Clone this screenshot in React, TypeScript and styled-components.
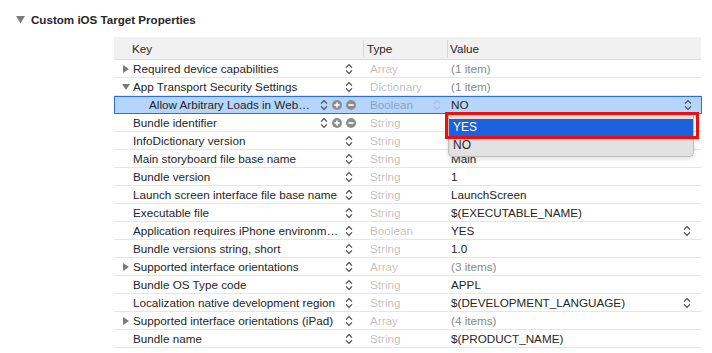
import React from "react";
import styled, { createGlobalStyle } from "styled-components";

const GlobalStyle = createGlobalStyle`
  html, body {
    margin: 0;
    padding: 0;
    background: #fff;
  }
  body {
    font-family: "Liberation Sans", Arial, sans-serif;
    font-size: 11.7px;
    color: #262626;
  }
`;

type Item = {
  key: string;
  type: string;
  value: string;
  disclosure?: "open" | "closed";
  indent?: boolean;
  editing?: boolean;
  selected?: boolean;
  muted?: boolean;
  popup?: boolean;
};

// values of the two rows under the open menu are covered by it
const items: Item[] = [
  { key: "Required device capabilities", type: "Array", value: "(1 item)", disclosure: "closed", muted: true },
  { key: "App Transport Security Settings", type: "Dictionary", value: "(1 item)", disclosure: "open", muted: true },
  { key: "Allow Arbitrary Loads in Web…", type: "Boolean", value: "NO", indent: true, editing: true, selected: true, popup: true },
  { key: "Bundle identifier", type: "String", value: "", editing: true },
  { key: "InfoDictionary version", type: "String", value: "" },
  { key: "Main storyboard file base name", type: "String", value: "Main" },
  { key: "Bundle version", type: "String", value: "1" },
  { key: "Launch screen interface file base name", type: "String", value: "LaunchScreen" },
  { key: "Executable file", type: "String", value: "$(EXECUTABLE_NAME)" },
  { key: "Application requires iPhone environm…", type: "Boolean", value: "YES", popup: true },
  { key: "Bundle versions string, short", type: "String", value: "1.0" },
  { key: "Supported interface orientations", type: "Array", value: "(3 items)", disclosure: "closed", muted: true },
  { key: "Bundle OS Type code", type: "String", value: "APPL" },
  { key: "Localization native development region", type: "String", value: "$(DEVELOPMENT_LANGUAGE)", popup: true },
  { key: "Supported interface orientations (iPad)", type: "Array", value: "(4 items)", disclosure: "closed", muted: true },
  { key: "Bundle name", type: "String", value: "$(PRODUCT_NAME)" },
];

function UpDown({ faded }: { faded?: boolean }) {
  return (
    <ChevronSvg width="8" height="12" viewBox="0 0 8 12" $faded={faded}>
      <path d="M1 4.6 L4 1.6 L7 4.6" />
      <path d="M1 7.4 L4 10.4 L7 7.4" />
    </ChevronSvg>
  );
}

function Triangle({ open }: { open?: boolean }) {
  return (
    <TriangleSvg width="8" height="8" viewBox="0 0 8 8">
      {open ? <path d="M0 1 H8 L4 7 Z" /> : <path d="M1 0 V8 L7 4 Z" />}
    </TriangleSvg>
  );
}

function RoundButton({ kind }: { kind: "add" | "remove" }) {
  return (
    <svg width="10" height="10" viewBox="0 0 10 10">
      <circle cx="5" cy="5" r="5" fill="#8e8e8e" />
      <path d="M2.4 5 H7.6" stroke="#fff" strokeWidth="1.6" />
      {kind === "add" && <path d="M5 2.4 V7.6" stroke="#fff" strokeWidth="1.6" />}
    </svg>
  );
}

export default function App() {
  return (
    <Page>
      <GlobalStyle />
      <SectionTitle>
        <SectionArrow viewBox="0 0 9 8" width="9" height="8">
          <path d="M0 0 H9 L4.5 7.5 Z" />
        </SectionArrow>
        Custom iOS Target Properties
      </SectionTitle>

      <Table>
        <HeaderRow>
          <HeaderCell $pad={18}>Key</HeaderCell>
          <HeaderCell $pad={3} $divider>Type</HeaderCell>
          <HeaderCell $pad={2} $divider>Value</HeaderCell>
        </HeaderRow>

        {items.map((item) => (
          <Row key={item.key} $selected={item.selected}>
            <KeyCell $indent={item.indent} $editing={item.editing}>
              <Disclosure>
                {item.disclosure && <Triangle open={item.disclosure === "open"} />}
              </Disclosure>
              <KeyText>{item.key}</KeyText>
              <Controls>
                <UpDown />
                {item.editing && <RoundButton kind="add" />}
                {item.editing && <RoundButton kind="remove" />}
              </Controls>
            </KeyCell>
            <TypeCell>
              <span>{item.type}</span>
              {item.selected && <UpDown faded />}
            </TypeCell>
            <ValueCell $muted={item.muted}>
              <span>{item.value}</span>
              {item.popup && <UpDown />}
              {item.selected && (
                <Menu>
                  <MenuOption $active>YES</MenuOption>
                  <MenuOption>NO</MenuOption>
                  <Highlight />
                </Menu>
              )}
            </ValueCell>
          </Row>
        ))}
      </Table>
    </Page>
  );
}

const Page = styled.div`
  width: 712px;
  height: 353px;
  overflow: hidden;
  padding: 12px 0 0 16px;
  box-sizing: border-box;
`;

const SectionTitle = styled.div`
  display: flex;
  align-items: center;
  gap: 6px;
  height: 14px;
  font-size: 11.6px;
  font-weight: bold;
  color: #262626;
`;

const SectionArrow = styled.svg`
  fill: #7d7d7d;
  margin-top: 1px;
`;

const Table = styled.div`
  margin: 11px 0 0 98px;
  width: 587px;
`;

const columns = "249px 84px 1fr";

const HeaderRow = styled.div`
  display: grid;
  grid-template-columns: ${columns};
  background: #f1f1f1;
  border-bottom: 1px solid #dcdcdc;
  padding: 3px 0 2px;
`;

const HeaderCell = styled.div<{ $pad: number; $divider?: boolean }>`
  height: 17px;
  line-height: 17px;
  padding-left: ${(p) => p.$pad}px;
  border-left: ${(p) => (p.$divider ? "1px solid #d6d6d6" : "none")};
  color: #262626;
`;

const Row = styled.div<{ $selected?: boolean }>`
  display: grid;
  grid-template-columns: ${columns};
  height: 18px;
  box-sizing: border-box;
  border-bottom: 1px solid ${(p) => (p.$selected ? "#2a6ee6" : "#e6e6e6")};
  background: ${(p) => (p.$selected ? "#b5d5fa" : "transparent")};
  box-shadow: ${(p) => (p.$selected ? "inset 0 1px 0 #2a6ee6, inset 1px 0 0 #2a6ee6, inset -1px 0 0 #2a6ee6" : "none")};
  margin-right: ${(p) => (p.$selected ? "-1px" : "0")};
`;

const KeyCell = styled.div<{ $indent?: boolean; $editing?: boolean }>`
  display: flex;
  align-items: center;
  min-width: 0;
  padding-left: ${(p) => (p.$indent ? 24 : 8)}px;
  padding-right: ${(p) => (p.$editing ? 7 : 10)}px;
`;

const Disclosure = styled.span`
  display: flex;
  align-items: center;
  width: 11px;
  flex: none;
`;

const TriangleSvg = styled.svg`
  fill: #7a7a7a;
`;

const KeyText = styled.span`
  flex: 1;
  min-width: 0;
  white-space: nowrap;
  overflow: hidden;
`;

const Controls = styled.span`
  display: flex;
  align-items: center;
  gap: 4px;
  flex: none;
`;

const ChevronSvg = styled.svg<{ $faded?: boolean }>`
  flex: none;
  fill: none;
  stroke: ${(p) => (p.$faded ? "#a8bcd6" : "#4a4a4a")};
  stroke-width: 1.2;
`;

const TypeCell = styled.div`
  display: flex;
  align-items: center;
  justify-content: space-between;
  padding: 0 6px 0 7px;
  color: rgba(0, 0, 0, 0.27);
  white-space: nowrap;
`;

const ValueCell = styled.div<{ $muted?: boolean }>`
  position: relative;
  display: flex;
  align-items: center;
  justify-content: space-between;
  padding: 0 10px 0 4px;
  color: ${(p) => (p.$muted ? "#8a8a8a" : "#262626")};
  white-space: nowrap;
`;

const Menu = styled.div`
  position: absolute;
  top: 18px;
  left: 1px;
  width: 246px;
  height: 43px;
  box-sizing: border-box;
  padding-top: 5px;
  background: #e2e2e2;
  border: 1px solid #bdbdbd;
  border-top: none;
  border-radius: 0 0 5px 5px;
  box-shadow: 0 2px 5px rgba(0, 0, 0, 0.12);
  z-index: 2;
`;

const MenuOption = styled.div<{ $active?: boolean }>`
  height: 17px;
  line-height: 17px;
  padding-left: 4px;
  font-size: 12px;
  background: ${(p) => (p.$active ? "#1b62dc" : "transparent")};
  color: ${(p) => (p.$active ? "#fff" : "#262626")};
  margin-bottom: 1px;
`;

const Highlight = styled.div`
  position: absolute;
  top: -2px;
  left: -4px;
  width: 254px;
  height: 27px;
  box-sizing: border-box;
  border: 3px solid #f20d0d;
`;
